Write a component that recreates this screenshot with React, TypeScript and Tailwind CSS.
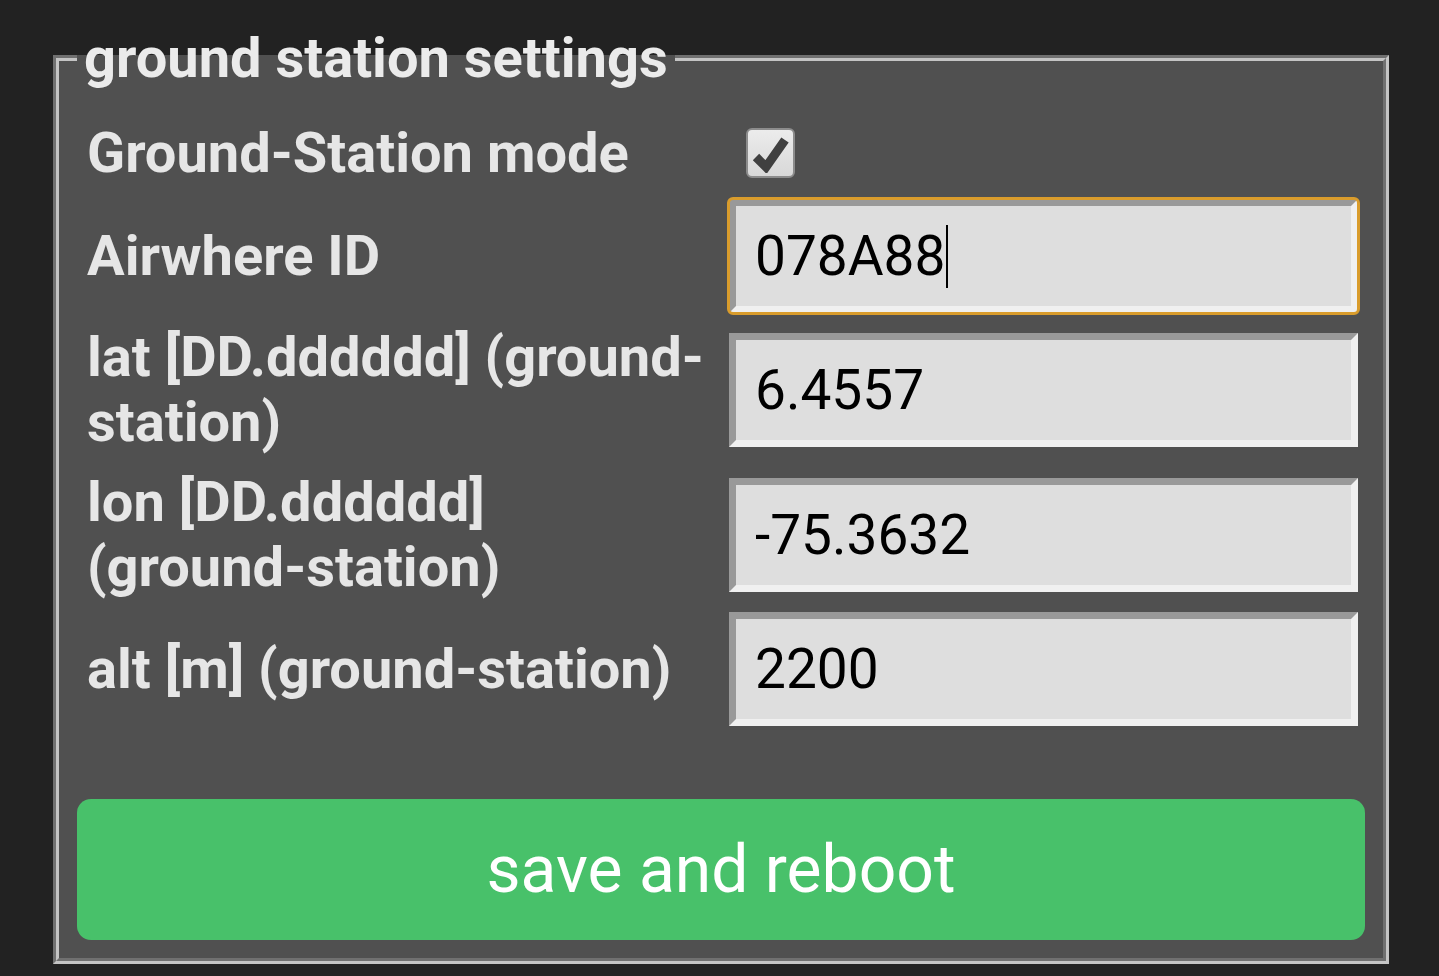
const rows = [
  { label: "Airwhere ID", value: "078A88", focused: true, h: "h-[120px]" },
  { label: "lat [DD.dddddd] (ground-station)", value: "6.4557", h: "h-[148px]" },
  { label: "lon [DD.dddddd] (ground-station)", value: "-75.3632", h: "h-[142px]" },
  { label: "alt [m] (ground-station)", value: "2200", h: "h-[126px]" },
];

function Field({ value, focused }: { value: string; focused?: boolean }) {
  return (
    <div
      className={
        "flex h-[114px] w-[629px] items-center border-[7px] border-t-[#999999] border-l-[#999999] border-b-[#f0f0f0] border-r-[#f0f0f0] bg-[#dedede] pl-[19px] text-[55px] leading-none text-black " +
        (focused ? "rounded-[4px] outline-[3px] outline-offset-[-1px] outline-[#d99c2c] outline-solid" : "")
      }
    >
      <span>{value}</span>
      {focused && <span className="ml-[1px] h-[63px] w-[2px] bg-black" />}
    </div>
  );
}

export default function App() {
  return (
    <div className="min-h-screen bg-[#222222] pt-[25px] font-['Roboto',sans-serif]">
      <fieldset className="ml-[53px] w-[1336px] border-[6px] border-[#c4c4c4] bg-[#505050] pl-[18px] pr-[18px] pb-[18px] [border-style:groove]">
        <legend className="px-[7px] text-[56px] font-bold leading-[66px] text-[#ebebeb]">
          ground station settings
        </legend>
        <div className="pt-[19px] pl-[10px] pr-[7px]">
          <div className="flex h-[86px] items-center">
            <div className="w-[641px] text-[56px] font-bold leading-[65px] text-[#e6e6e6]">
              Ground-Station mode
            </div>
            <div className="ml-[18px] flex h-[50px] w-[49px] items-center justify-center rounded-[6px] border-2 border-[#8c8c8c] bg-gradient-to-b from-[#ececec] to-[#d8d8d8]">
              <svg width="40" height="40" viewBox="0 0 40 40">
                <path d="M5 24 L15 34 L34 7" fill="none" stroke="#404040" strokeWidth="9" strokeLinejoin="miter" />
              </svg>
            </div>
          </div>
          {rows.map((r) => (
            <div key={r.label} className={"flex items-center " + r.h}>
              <div className="w-[642px] pr-[18px] text-[56px] font-bold leading-[65px] text-[#e6e6e6]">
                {r.label}
              </div>
              <Field value={r.value} focused={r.focused} />
            </div>
          ))}
        </div>
        <button
          type="button"
          className="mt-[67px] flex h-[141px] w-full items-center justify-center rounded-[14px] bg-[#48c16a] text-[66px] leading-none text-white"
        >
          save and reboot
        </button>
      </fieldset>
    </div>
  );
}
